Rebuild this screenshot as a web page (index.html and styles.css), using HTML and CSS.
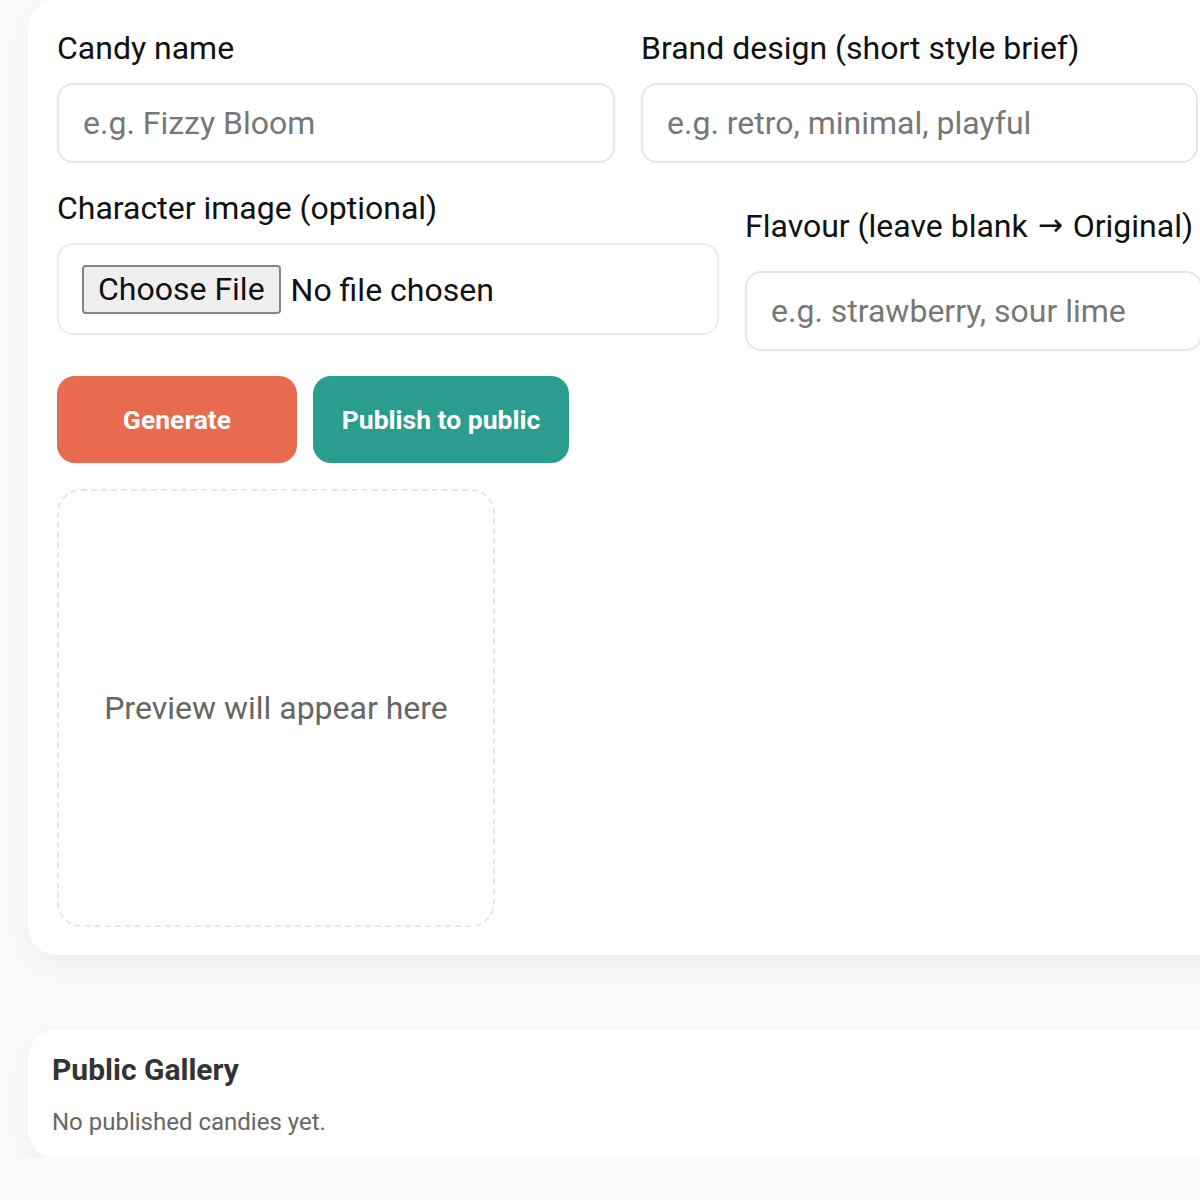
FILE: index.html
```html
<!DOCTYPE html>
<html lang="en">
<head>
	<meta charset="UTF-8">
	<meta name="viewport" content="width=device-width, initial-scale=1.0">
	<title>Candy Maker</title>
	<link rel="stylesheet" href="styles.css">
</head>
<body>
	<div class="page">
		<section class="card maker">
			<div class="row row-top">
				<div class="field">
					<label class="field-label" for="candyName">Candy name</label>
					<input class="text-input" id="candyName" type="text" placeholder="e.g. Fizzy Bloom">
				</div>
				<div class="field">
					<label class="field-label" for="brandDesign">Brand design (short style brief)</label>
					<input class="text-input" id="brandDesign" type="text" placeholder="e.g. retro, minimal, playful">
				</div>
			</div>
			<div class="row row-second">
				<div class="field">
					<label class="field-label" for="charImage">Character image (optional)</label>
					<div class="file-box">
						<input class="file-input" id="charImage" type="file" accept="image/*">
					</div>
				</div>
				<div class="field flavour-field">
					<label class="field-label" for="flavour">Flavour (leave blank <span class="arrow">→</span> Original)</label>
					<input class="text-input" id="flavour" type="text" placeholder="e.g. strawberry, sour lime">
				</div>
			</div>
			<div class="actions">
				<button class="btn btn-generate" type="button">Generate</button>
				<button class="btn btn-publish" type="button">Publish to public</button>
			</div>
			<div class="preview">
				<span class="preview-text">Preview will appear here</span>
			</div>
		</section>

		<section class="card gallery">
			<h2 class="gallery-title">Public Gallery</h2>
			<p class="gallery-empty">No published candies yet.</p>
		</section>
	</div>
</body>
</html>
```

FILE: styles.css
```css
html, body {
	overflow: hidden;
}
body {
	margin: 0;
	background-color: #fbfbfa;
	font-family: Roboto, "Liberation Sans", sans-serif;
	color: #111111;
}
.page {
	width: 1199px;
	padding-left: 28px;
	display: flex;
	flex-direction: column;
	gap: 75px;
}
.card {
	background-color: #ffffff;
	border-radius: 28px;
	box-shadow: 0 10px 32px rgba(0, 0, 0, 0.06);
}
.maker {
	padding: 30px 29px 28px 29px;
	display: flex;
	flex-direction: column;
	align-items: flex-start;
	gap: 26px;
}
.row {
	display: grid;
	column-gap: 26px;
	width: 100%;
	box-sizing: border-box;
}
.row-top {
	grid-template-columns: 558px 1fr;
}
.row-second {
	grid-template-columns: 662px 1fr;
	align-items: start;
	margin-top: 1px;
}
.field {
	display: flex;
	flex-direction: column;
}
.field-label {
	font-size: 32px;
	line-height: 36px;
	height: 36px;
	margin-bottom: 17px;
	color: #111111;
	white-space: nowrap;
}
.arrow {
	font-family: "DejaVu Sans", sans-serif;
	font-size: 30px;
	line-height: 0;
	vertical-align: 2px;
	margin: 0 2px;
}
.flavour-field {
	margin-top: 18px;
}
.flavour-field .field-label {
	margin-bottom: 27px;
}
.text-input {
	height: 80px;
	box-sizing: border-box;
	border: 2px solid #e6e6e6;
	border-radius: 16px;
	padding: 0 24px;
	font-family: Roboto, "Liberation Sans", sans-serif;
	font-size: 32px;
	color: #111111;
	background-color: #ffffff;
	outline: none;
}
.text-input::placeholder {
	color: #777777;
}
.file-box {
	height: 92px;
	box-sizing: border-box;
	border: 2px solid #ebebeb;
	border-radius: 16px;
	padding: 0 23px;
	display: flex;
	align-items: center;
}
.file-input {
	font-family: Roboto, "Liberation Sans", sans-serif;
	font-size: 32px;
	color: #111111;
}
.file-input::file-selector-button {
	font-family: Roboto, "Liberation Sans", sans-serif;
	font-size: 32px;
	height: 49px;
	padding: 0 14px;
	margin-right: 10px;
	background-color: #efefef;
	border: 2px solid #858585;
	border-radius: 4px;
	color: #111111;
}
.actions {
	display: flex;
	gap: 16px;
	margin-top: -1px;
}
.btn {
	height: 87px;
	border: none;
	border-radius: 18px;
	font-family: Roboto, "Liberation Sans", sans-serif;
	font-size: 26.5px;
	font-weight: bold;
	color: #ffffff;
	cursor: pointer;
}
.btn-generate {
	width: 240px;
	background-color: #e86b4f;
}
.btn-publish {
	width: 256px;
	background-color: #2a9d8f;
}
.preview {
	width: 438px;
	height: 438px;
	box-sizing: border-box;
	border: 2px dashed #e6e6e6;
	border-radius: 24px;
	display: flex;
	align-items: center;
	justify-content: center;
}
.preview-text {
	font-size: 32px;
	color: #666666;
}
.gallery {
	padding: 22px 24px 22px 24px;
}
.gallery-title {
	margin: 0 0 20px 0;
	font-size: 30px;
	line-height: 36px;
	font-weight: bold;
	color: #333333;
}
.gallery-empty {
	margin: 0;
	font-size: 24px;
	line-height: 28px;
	color: #666666;
}
```
